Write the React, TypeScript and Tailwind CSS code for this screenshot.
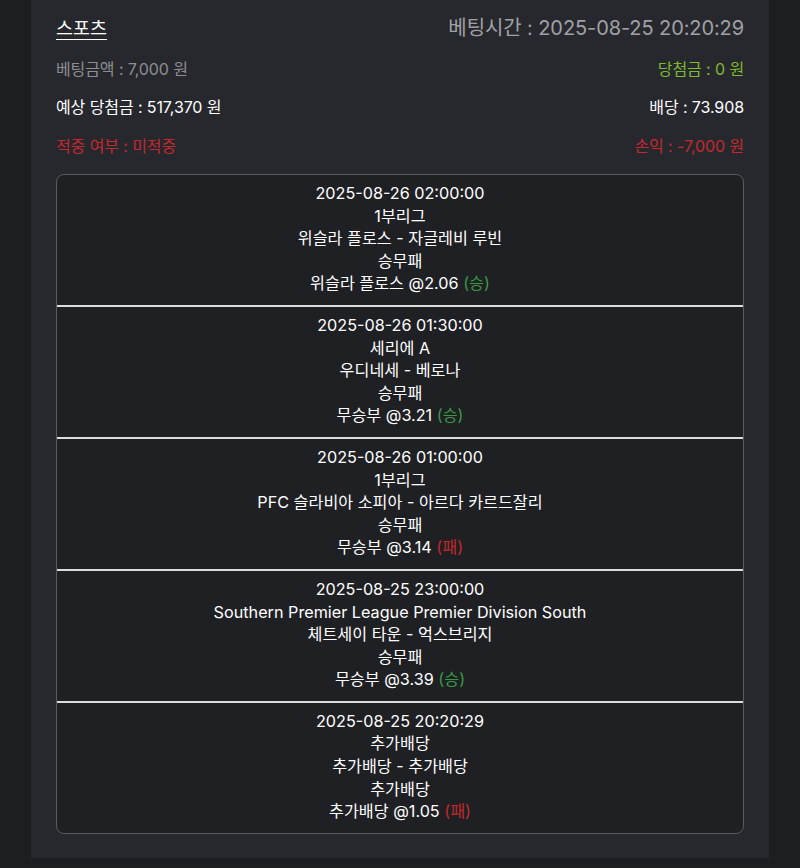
import React from "react";

type Item = { time: string; league: string; match: string; market: string; pick: string; odds: string; result: "승" | "패" };

const items: Item[] = [
  { time: "2025-08-26 02:00:00", league: "1부리그", match: "위슬라 플로스 - 자글레비 루빈", market: "승무패", pick: "위슬라 플로스", odds: "2.06", result: "승" },
  { time: "2025-08-26 01:30:00", league: "세리에 A", match: "우디네세 - 베로나", market: "승무패", pick: "무승부", odds: "3.21", result: "승" },
  { time: "2025-08-26 01:00:00", league: "1부리그", match: "PFC 슬라비아 소피아 - 아르다 카르드잘리", market: "승무패", pick: "무승부", odds: "3.14", result: "패" },
  { time: "2025-08-25 23:00:00", league: "Southern Premier League Premier Division South", match: "체트세이 타운 - 억스브리지", market: "승무패", pick: "무승부", odds: "3.39", result: "승" },
  { time: "2025-08-25 20:20:29", league: "추가배당", match: "추가배당 - 추가배당", market: "추가배당", pick: "추가배당", odds: "1.05", result: "패" },
];

export default function App() {
  return (
    <div
      className="min-h-[868px] w-full bg-[#1d1e22]"
      style={{ fontFamily: 'Inter, "Noto Sans CJK KR", sans-serif' }}
    >
      <div className="mx-[31px] bg-[#27282d] px-[25px] pt-[14px] pb-[24px]">
        <div className="flex items-center justify-between h-[28px]">
          <span className="text-[18.5px] text-white underline underline-offset-[4px] decoration-1 leading-[28px]">스포츠</span>
          <span className="text-[20px] text-[#a0a1a6] leading-[28px] tracking-[-0.1px]">베팅시간 : 2025-08-25 20:20:29</span>
        </div>
        <div className="mt-[15px] flex justify-between h-[24px] items-center text-[16px] leading-[24px] tracking-[-0.1px]">
          <span className="text-[#8d8e93]">베팅금액 : 7,000 원</span>
          <span className="text-[#7dba2f]">당첨금 : 0 원</span>
        </div>
        <div className="mt-[14px] flex justify-between h-[24px] items-center text-[16px] leading-[24px] tracking-[-0.1px] text-white">
          <span>예상 당첨금 : 517,370 원</span>
          <span>배당 : 73.908</span>
        </div>
        <div className="mt-[15px] flex justify-between h-[24px] items-center text-[16px] leading-[24px] tracking-[-0.1px] text-[#c4282e]">
          <span>적중 여부 : 미적중</span>
          <span>손익 : -7,000 원</span>
        </div>
        <div className="mt-[16px] rounded-[8px] border border-[#595a5f] bg-[#1f2024] overflow-hidden">
          {items.map((it, i) => (
            <div
              key={i}
              className={`flex flex-col items-center pt-[7px] pb-[10px] text-center text-[16.2px] leading-[22.6px] text-white ${i < items.length - 1 ? "border-b-2 border-[#dcdcdc]" : ""}`}
            >
              <div>{it.time}</div>
              <div>{it.league}</div>
              <div>{it.match}</div>
              <div>{it.market}</div>
              <div>
                {it.pick} @{it.odds}{" "}
                <span className={it.result === "승" ? "text-[#3a9a44]" : "text-[#c4282e]"}>({it.result})</span>
              </div>
            </div>
          ))}
        </div>
      </div>
    </div>
  );
}
